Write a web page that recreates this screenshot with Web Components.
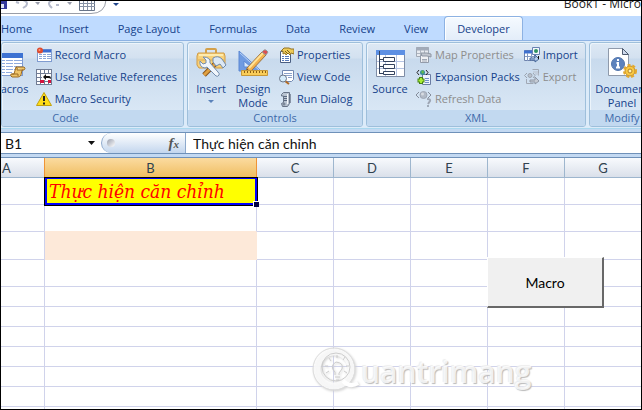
<!DOCTYPE html>
<html lang="vi">
<head>
<meta charset="utf-8">
<title>Book1 - Microsoft Excel</title>
<style>
html, body { margin: 0; height: 100%; }
body { font-family: "Open Sans", "Noto Sans", sans-serif; font-size: 11px; color: #15428b; background: #fff; }
</style>
</head>
<body>
<app-window></app-window>

<script>
const define = (name, html, setup) => {
  const tpl = document.createElement('template');
  tpl.innerHTML = html;
  customElements.define(name, class extends HTMLElement {
    constructor() {
      super();
      this.attachShadow({ mode: 'open' }).append(tpl.content.cloneNode(true));
    }
    connectedCallback() { if (setup) setup(this, this.shadowRoot); }
  });
};

const small = body => `<svg width="16" height="16" viewBox="0 0 16 16">${body}</svg>`;
const large = body => `<svg width="32" height="32" viewBox="0 0 32 32">${body}</svg>`;
const sheet = (x, y, w, h, head, line) => `<rect x="${x}.5" y="${y}.5" width="${w}" height="${h}" fill="#fff" stroke="${line}"/><path d="M${x + 1} ${y + 2}h${w - 1}" stroke="${head}" stroke-width="3"/>`;
const icons = {
  macros: large(`<rect x="3.500" y="6.500" width="25" height="22" fill="#fff" stroke="#7d9ad0"/><path d="M3 8.500h26" stroke="#3d72d2" stroke-width="5"/><path d="M4 13.500h24M4 16.500h24M4 19.500h24M4 22.500h24M4 25.500h14" stroke="#8eabdf"/><path d="M11.500 11v17M19.500 11v17" stroke="#fff"/><path d="M22 20h8q2 1 0 3h-2l-1 5q-1 2-3 2h-6q-2-1-1-3h3z" fill="#efc56a" stroke="#9b6b22"/><path d="M18 27h6v2" fill="none" stroke="#9b6b22"/><path d="M22 20q2 0 1 3h6" fill="#fbe4a0" stroke="#9b6b22"/>`),
  record: small(sheet(1, 2, 14, 12, '#3c6bd0', '#7f9cd0') + `<path d="M3 7.500h12M3 9.500h12M3 11.500h12" stroke="#8ca6d8"/><path d="M6.500 6v8M10.500 6v8" stroke="#fff"/><circle cx="4" cy="3.500" r="3" fill="#df4d30"/><circle cx="3.500" cy="3" r="1" fill="#ff9b7b"/>`),
  relative: small(`<path fill="#fff" d="M0 0h16v16H0z"/><path d="M.5 0v16M4.500 0v16M8.500 0v16M12.500 0v16M15.500 0v16M0 .5h16M0 4.500h16M0 8.500h16M0 12.500h16M0 15.500h16" stroke="#707c94"/><path d="M6 5h9v6H6z" fill="#fff"/><path d="M4 11h4v3H4zM12 11h3v3h-3z" fill="#d3133e"/><path d="M7 8l3-3v2h3q2 0 2 3-1-1-3-1h-2v2z" fill="#111"/>`),
  security: small(`<path d="M8 1.500L15.500 14.500H.5z" fill="#ffdd18" stroke="#c0a010" stroke-linejoin="round"/><path d="M8 5v5M8 11.500v2" stroke="#222" stroke-width="2"/>`),
  insert: large(`<path d="M11 6V3q0-1 1-1h8q1 0 1 1v3" fill="none" stroke="#d3a04a" stroke-width="2"/><path d="M3 6h26l1 3v9l-2 3H4l-2-3V9z" fill="#f8d17a" stroke="#cf9a44"/><path d="M3 13h26" stroke="#d9ab55"/><path d="M4 8h24" stroke="#ffebad" stroke-width="2"/><path d="M9 28L22 15" stroke="#87521b" stroke-width="5"/><path d="M9 28L22 15" stroke="#e0a040" stroke-width="3"/><path d="M18 11q5-3 9 1l4 6-3 3-3-4-4 2-3-4z" fill="#dce8f5" stroke="#718bac"/><path d="M8 10l3 3v3l-3 1-3-3q-1 6 5 7l2-1 9 9q2 1 3-1 1-1-1-3l-8-9q1-6-7-6z" fill="#f0f5fb" stroke="#758eae"/>`),
  design: large(`<path d="M2 4v20h22z" fill="#6f9be1" stroke="#5d88d3"/><path d="M7 14v6h7z" fill="#d8e8fb" stroke="#5d88d3"/><path d="M3 6l19 17" stroke="#b9d2f4"/><path d="M10 21L25 5l4 3-15 16-5 2z" fill="#f4b24d" stroke="#9b7240"/><path d="M12 21L26 6" stroke="#ffe295" stroke-width="2"/><path d="M25 5l2-2q2-1 4 2l-2 3z" fill="#dc4e50" stroke="#999"/><path d="M10 22l-1 4 4-2" fill="#333"/><path d="M4.500 23.500h26v5h-26z" fill="#f9cc58" stroke="#c79838"/><path d="M7.500 24v2M10.500 24v2M13.500 24v2M16.500 24v2M19.500 24v2M22.500 24v2M25.500 24v2M28.500 24v2" stroke="#8b5e13"/>`),
  properties: small(`<path d="M2.500 4.500h10v11h-10z" fill="#fff" stroke="#4a5e82"/><path d="M4 9.500h2M7 9.500h4M4 11.500h2M7 11.500h4M4 13.500h2M7 13.500h4" stroke="#587bb9"/><path d="M3 4l3-3h5l2 1h3v5l-3-1-1 2-2-2-2 2-1-2-2 1V4z" fill="#efcb58" stroke="#927326"/><path d="M7 4l3 3M9 3l3 3" stroke="#78601f"/>`),
  code: small(`<path d="M4.500 1.500h11v9l-2 2h-9z" fill="#fff" stroke="#7188b1"/><path d="M6 4.500h8M7 6.500h7M10 8.500h4" stroke="#8aa1c9"/><path d="M7 12l4 3" stroke="#b26a24" stroke-width="2"/><circle cx="5" cy="9.500" r="3.500" fill="#d6edfb" stroke="#6c7789"/>`),
  dialog: small(`<path d="M3.500 3.500l2-2h6v11l-2 3h-5l-1-3 2-1V5h-2z" fill="#b8c3d1" stroke="#667286"/><path d="M9.500 3v10" stroke="#f4f7fb"/><path d="M6 5.500h3M6 7.500h3M6 9.500h3" stroke="#59677e"/><circle cx="6" cy="13" r="1.500" fill="#7b8798"/><path d="M12.500 3v9" stroke="#8793a6"/>`),
  source: large(`<path d="M2.500 3.500h28v26h-28z" fill="#fff" stroke="#7e8ca5"/><path d="M2 5.500h29" stroke="#5d90e4" stroke-width="5"/><path d="M3 14.500h27M3 21.500h27M11.500 8v21M22.500 8v21" stroke="#b5c4e4"/><path d="M5.500 4v23M5 12.500h5M5 19.500h5M5 26.500h5" fill="none" stroke="#34435e"/><path d="M9.500 10.500h11v4h-11zM9.500 17.500h11v4h-11zM9.500 24.500h11v3h-11z" fill="#fff" stroke="#34435e"/>`),
  map: small(`<path d="M.5.500h12v9H.5z" fill="#e8ebf0" stroke="#a1a9b5"/><path d="M0 2h13" stroke="#a2abb9" stroke-width="3"/><path d="M4.500 3v7M8.500 3v7M1 6.500h11" stroke="#aeb5c0"/><path d="M4.500 8.500h8v7h-8z" fill="#f0f1f4" stroke="#939ba9"/><path d="M5 6h6l4 1v3l-4-1H6z" fill="#c1c6cf" stroke="#8f97a4"/><path d="M6 12.500h5M6 14h5" stroke="#a0a8b5"/>`),
  expansion: small(`<path d="M6.500 5.500h8v10h-8z" fill="#eef3ff" stroke="#6a7ca3"/><path d="M9 9.500h4M9 11.500h4M9 13.500h4" stroke="#7290c8"/><path d="M3 1L1 3.500 3 6M10 1l2 2.500L10 6" fill="none" stroke="#222"/><circle cx="6.500" cy="3.500" r="2.500" fill="#368c9b"/><path d="M5 3l2-2 1 2-1 2z" fill="#64bb4b"/><path d="M5 8v7M1.500 11.500h7" stroke="#478319" stroke-width="4"/><path d="M5 9v5M2.500 11.500h5" stroke="#a9ef35" stroke-width="2"/>`),
  refresh: small(`<path d="M3 1L0 4l3 3M12 1l3 3-3 3" fill="none" stroke="#858d9b"/><circle cx="7.500" cy="4" r="3.500" fill="#b2bac7" stroke="#9fa7b4"/><circle cx="6.500" cy="3" r="1.500" fill="#d7dbe1"/><path d="M11 8q4 0 3 2l-2 3" fill="none" stroke="#9ea6b4" stroke-width="2"/><circle cx="12" cy="15" r="1" fill="#8e97a6"/>`),
  import: small(`<path d="M.5 3.500h10v10H.5z" fill="#fff" stroke="#6e83ad"/><path d="M0 5h11" stroke="#3e70cf" stroke-width="3"/><path d="M3.500 6v8M7.500 6v8M1 9.500h10" stroke="#8399c1"/><path d="M8.500.5h7v7h-7z" fill="#f4f7fd" stroke="#6982b2"/><circle cx="12" cy="4" r="2" fill="#2d9261"/><path d="M6 11h5V8l4 4-4 3v-2H6z" fill="#b6cdec" stroke="#466798"/><path d="M14.500 9v3" stroke="#111"/>`),
  export: small(`<path d="M3 4L.5 6.500 3 9M9 4l2 2.500L9 9" fill="none" stroke="#9ba3af"/><circle cx="6" cy="6.500" r="2" fill="#bac1cc" stroke="#9ba3af"/><path d="M8.500.5h6v6M2.500 10v4.500h7" fill="none" stroke="#a1a8b4"/><path d="M9 3h5M11 5h4" stroke="#b9bfca"/><path d="M6 11h5V8l4 4-4 3v-2H6z" fill="#c6ccd5" stroke="#8e97a5"/>`),
  panel: large(`<path d="M2.500 1.500h14l6 6v21h-20z" fill="#fff" stroke="#8f9aab"/><path d="M16.500 1.500v6h6z" fill="#cfdaed" stroke="#4e5b70"/><circle cx="12" cy="17" r="6.500" fill="#5c82bd" stroke="#5477ac"/><path d="M12 12v2M10.500 16H12v4M10 20.500h4" fill="none" stroke="#fff" stroke-width="2"/><circle cx="24" cy="24" r="5" fill="#f9c943" stroke="#c08c2a"/><circle cx="24" cy="24" r="6" fill="none" stroke="#e5a92d" stroke-width="2" stroke-dasharray="3 2"/><circle cx="24" cy="24" r="2" fill="#fff3b4" stroke="#b78220"/>`)
};

define('quick-bar', `<style>
:host { display: flex; height: 15px; flex: none; justify-content: space-between; background: #fff; overflow: hidden; }
svg { display: block; }
span { font-size: 12px; line-height: 18px; color: #222; margin-top: -6px; white-space: nowrap; }
</style>
<svg width="130" height="15" viewBox="1 1 130 15"><path d="M0 13.500h91q14 0 15-13.500" fill="none" stroke="#999da7"/><path d="M0 0h7v9H0z" fill="#343a9c"/><path d="M0 4h4v4H0z" fill="#dde4f4"/><path d="M16 2l3 1M23 0q6 2 3 6l-3 2" fill="none" stroke="#b5bacb" stroke-width="2"/><path d="M35 2h5l-2 3zM67 2h5l-2 3z" fill="#999dac"/><path d="M53 0q-6 2-3 6l2 2M56 5h3" fill="none" stroke="#b5bacb" stroke-width="2"/><path d="M79.500 0h15v10.500h-15z" fill="#fff" stroke="#687488"/><path d="M83.500 0v10M87.500 0v10M91.500 0v10M80 3.500h15M80 6.500h15" stroke="#8792a5"/><path d="M113 3h6l-3 3z" fill="#20458b"/></svg>
<span>Book1 - Micro</span>`);

define('ribbon-tab', `<style>
:host { display: block; flex: none; }
button { height: 24px; margin: 0; padding: 0 12px; border: 1px solid transparent; border-bottom: 0; background: none; color: #15428b; font: inherit; line-height: 20px; }
:host([selected]) button { background: linear-gradient(#f5faff, #e3edf9); border-color: #8db2e3; border-radius: 4px 4px 0 0; box-shadow: inset 1px 1px #fff; }
:host([first]) button { padding: 0 10px 0 0; border-left: 0; }
</style><button type="button" role="tab"><slot></slot></button>`);

define('ribbon-tabs', `<style>
:host { display: flex; flex: none; height: 24px; gap: 3px; background: #bfdbff; overflow: hidden; }
</style><slot></slot>`);

define('ribbon-group', `<style>
:host { display: flex; flex-direction: column; flex: 0 0 var(--w); box-sizing: border-box; height: 85px; border: 1px solid #9ebfdb; border-radius: 3px; overflow: hidden; background: linear-gradient(#dde8f4 0, #d3e1f0 15px, #c8daed 16px, #d9e7f5 68px); box-shadow: inset 1px 1px #ecf4fb; }
.body { display: flex; flex: 1; padding: 1px var(--pad-end, 0px) 0 var(--pad, 2px); justify-content: var(--justify, flex-start); overflow: hidden; }
.label { flex: none; height: 16px; line-height: 15px; text-align: center; color: #3e6aaa; background: #c2d9f0; padding-right: var(--label-pad, 0px); }
</style><div class="body"><slot></slot></div><div class="label"></div>`,
(el, root) => { root.querySelector('.label').textContent = el.getAttribute('label'); });

define('command-stack', `<style>:host { display: flex; flex-direction: column; flex: none; margin-left: var(--lead, 4px); }</style><slot></slot>`);

define('ribbon-command', `<style>
:host { display: block; flex: none; }
button { display: flex; align-items: center; gap: 3px; height: 22px; margin: 0; padding: 0; border: 0; background: none; color: #15428b; font: inherit; white-space: nowrap; }
button:disabled { color: #8d8d8d; }
svg { flex: none; }
i { display: contents; }
span { line-height: 16px; }
:host([large]) { width: var(--cmd-w, 52px); }
:host([large]) button { flex-direction: column; width: 100%; height: auto; padding-top: 3px; }
:host([large]) span { line-height: 14px; text-align: center; }
b { display: none; width: 0; border: 3px solid transparent; border-top-color: #5a82ba; margin-top: 1px; }
:host([menu]) b { display: block; }
</style><button type="button"><i></i><span><slot></slot></span><b></b></button>`,
(el, root) => {
  root.querySelector('i').innerHTML = icons[el.getAttribute('icon')];
  root.querySelector('button').disabled = el.hasAttribute('off');
});

define('ribbon-bar', `<style>
:host { display: flex; flex: none; gap: 3px; height: 89px; box-sizing: border-box; padding-top: 1px; border-top: 1px solid #8db2e3; border-bottom: 1px solid #a9d8ee; background: #dcebf9; overflow: hidden; }
</style><slot></slot>`);

define('formula-bar', `<style>
:host { display: flex; flex: none; height: 20px; border: solid #6f91b9; border-width: 1px 0; margin-top: 3px; background: #fff; color: #111; font: 14px Lato, "Noto Sans", sans-serif; }
input { border: 0; outline: 0; padding: 0 0 0 4px; margin: 0; min-width: 0; background: none; color: inherit; font: inherit; }
.name { width: 84px; box-sizing: border-box; }
.arrow { align-self: center; width: 7px; height: 4px; padding: 0; margin: 0 6px 0 3px; border: 0; background: #111; clip-path: polygon(0 0, 100% 0, 50% 100%); }
.fx { display: flex; align-items: center; justify-content: space-between; width: 85px; box-sizing: border-box; padding: 0 6px 0 5px; margin: 0; border: 1px solid #8da9cc; border-width: 0 1px; border-radius: 10px 0 0 10px; background: linear-gradient(#fff, #c3d6ee); color: #555; font: italic bold 15px "Liberation Serif", serif; }
.fx i { width: 8px; height: 8px; border-radius: 50%; background: linear-gradient(135deg, #999fae, #fff); }
.fx small { font-size: 11px; }
.formula { flex: 1; padding-left: 7px; }
</style>
<input class="name" aria-label="Name Box" value="B1"><button class="arrow" type="button" aria-label="Names"></button>
<button class="fx" type="button" aria-label="Insert Function"><i></i><span>f<small>x</small></span></button>
<input class="formula" aria-label="Formula" value="Thực hiện căn chỉnh">`);

define('sheet-grid', `<style>
:host { display: block; position: relative; flex: 1; min-height: 0; overflow: hidden; margin-top: 3px; border-top: 1px solid #6f91b9; background: #fff; }
table { width: 100%; table-layout: fixed; border-collapse: separate; border-spacing: 0; }
.a { width: 44px; } .b { width: 212px; } .c { width: 77px; }
th, td { box-sizing: border-box; padding: 0; border: solid #d0d3eb; border-width: 0 1px 1px 0; height: 20px; }
th { background: linear-gradient(#f8fafd, #dae0ea); border-color: #9eb6ce; color: #30424f; font: 13px Lato, "Noto Sans", sans-serif; line-height: 18px; }
th:first-child { border-right-color: #ef9436; text-align: left; padding-left: 1px; }
th.on { background: linear-gradient(#fbdba0, #f0be62); border-right-color: #ef9436; border-bottom-color: #b69046; }
th:last-child, td:last-child { border-right: 0; }
tr.tall td { height: 27px; }
tr.fill td { height: 28px; }
td.peach { background: #fde9d9; border-color: #fde9d9; }
td.over { border-bottom-color: #fde9d9; }
td.sel { position: relative; background: #ff0; color: #f00; border: 2px solid #00f; border-top-width: 1px; outline: 1px solid #000; font: italic 19px "DejaVu Serif Condensed", "Liberation Serif", serif; line-height: 24px; padding-left: 2px; white-space: nowrap; }
td.sel::after { content: ""; position: absolute; right: -4px; bottom: -4px; width: 5px; height: 5px; background: #004; border: 1px solid #fff; border-width: 1px 0 0 1px; }
::slotted(macro-button) { position: absolute; left: 486px; top: 99px; }
::slotted(brand-mark) { position: absolute; left: 311px; top: 186px; }
</style>
<table><colgroup><col class="a"><col class="b"><col class="c"><col class="c"><col class="c"><col class="c"><col></colgroup>
<thead><tr><th>A</th><th class="on">B</th><th>C</th><th>D</th><th>E</th><th>F</th><th>G</th></tr></thead><tbody></tbody></table><slot></slot>`,
(el, root) => {
  const kinds = ['tall', 'tall', 'fill', 'tall', '', '', '', '', '', '', ''];
  root.querySelector('tbody').innerHTML = kinds.map((kind, r) => {
    const cls = ['sel', 'over', 'peach'][r] || '';
    return `<tr class="${kind}"><td></td><td class="${cls}">${r ? '' : 'Thực hiện căn chỉnh'}</td>${'<td></td>'.repeat(5)}</tr>`;
  }).join('');
});

define('macro-button', `<style>
:host { display: block; }
button { width: 117px; height: 51px; margin: 0; padding: 0; border: solid; border-width: 1px 2px 2px 1px; border-color: #fff #686868 #686868 #fff; background: #f0f0f0; color: #000; font: 14px Lato, sans-serif; }
</style><button type="button"><slot></slot></button>`);

define('brand-mark', `<style>
:host { display: flex; align-items: center; pointer-events: none; color: rgba(255,255,255,.8); font: 600 30px "Open Sans", sans-serif; line-height: 48px; text-shadow: 1px 1px 1px #bbb, -1px -1px 1px #eee; }
svg { display: block; filter: drop-shadow(1px 1px 1px #ccc); margin-right: -3px; }
span { padding-top: 4px; }
</style>
<svg width="52" height="50" viewBox="0 0 52 50" fill="none"><circle cx="22" cy="24" r="17" stroke="#fff" stroke-opacity=".8" stroke-width="7"/><circle cx="22" cy="24" r="21" stroke="#ddd"/><circle cx="24" cy="22" r="14" stroke="#ccc"/><path d="M31 36q7 7 15 2" stroke="#fff" stroke-width="4"/><path d="M23 30v-3q-6-6 1-10 8 1 6 7l-3 4v2M23 32h5M24 35h3M25 10v3M17 13l2 3M33 12l-2 3M13 21h3M34 21h3M14 28l3-2M35 28l-3-2" stroke="#ccc"/></svg><span>uantrimang</span>`);

define('app-window', `<style>
:host { display: flex; flex-direction: column; box-sizing: border-box; height: 100%; border: 1px solid #000; background: #c3d9f2; overflow: hidden; }
</style>
<quick-bar></quick-bar>
<ribbon-tabs role="tablist"><ribbon-tab first>Home</ribbon-tab><ribbon-tab>Insert</ribbon-tab><ribbon-tab>Page Layout</ribbon-tab><ribbon-tab>Formulas</ribbon-tab><ribbon-tab>Data</ribbon-tab><ribbon-tab>Review</ribbon-tab><ribbon-tab>View</ribbon-tab><ribbon-tab selected>Developer</ribbon-tab></ribbon-tabs>
<ribbon-bar>
<ribbon-group label="Code" style="--w:183px;--justify:flex-end;--label-pad:54px;--pad-end:6px;--lead:0px"><ribbon-command large icon="macros">Macros</ribbon-command><command-stack><ribbon-command icon="record">Record Macro</ribbon-command><ribbon-command icon="relative">Use Relative References</ribbon-command><ribbon-command icon="security">Macro Security</ribbon-command></command-stack></ribbon-group>
<ribbon-group label="Controls" style="--w:176px;--cmd-w:42px"><ribbon-command large menu icon="insert">Insert</ribbon-command><ribbon-command large icon="design">Design<br>Mode</ribbon-command><command-stack><ribbon-command icon="properties">Properties</ribbon-command><ribbon-command icon="code">View Code</ribbon-command><ribbon-command icon="dialog">Run Dialog</ribbon-command></command-stack></ribbon-group>
<ribbon-group label="XML" style="--w:220px;--cmd-w:44px;--pad:1px"><ribbon-command large icon="source">Source</ribbon-command><command-stack><ribbon-command off icon="map">Map Properties</ribbon-command><ribbon-command icon="expansion">Expansion Packs</ribbon-command><ribbon-command off icon="refresh">Refresh Data</ribbon-command></command-stack><command-stack><ribbon-command icon="import">Import</ribbon-command><ribbon-command off icon="export">Export</ribbon-command></command-stack></ribbon-group>
<ribbon-group label="Modify" style="--w:66px;--cmd-w:60px"><ribbon-command large icon="panel">Document<br>Panel</ribbon-command></ribbon-group>
</ribbon-bar>
<formula-bar></formula-bar>
<sheet-grid><macro-button>Macro</macro-button><brand-mark></brand-mark></sheet-grid>`);
</script>
</body>
</html>
